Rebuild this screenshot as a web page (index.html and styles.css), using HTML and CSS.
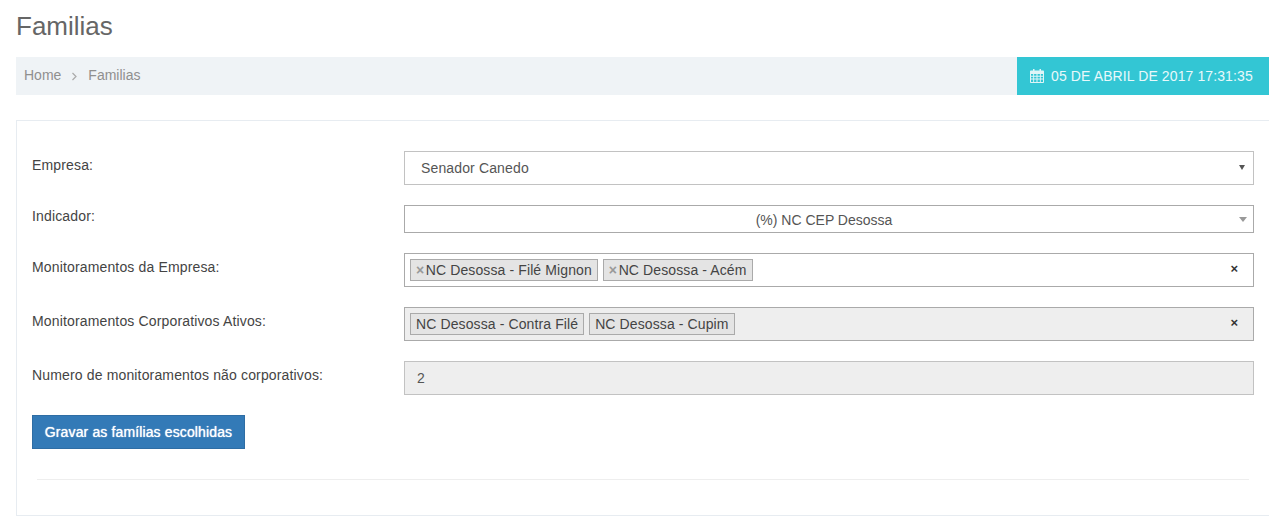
FILE: index.html
```html
<!DOCTYPE html>
<html lang="pt">
<head>
<meta charset="utf-8">
<title>Familias</title>
<link rel="stylesheet" href="styles.css">
</head>
<body>
<h1 class="page-title">Familias</h1>
<div class="bar">
  <nav class="crumbs"><span>Home</span><svg class="chev" width="7" height="9" viewBox="0 0 7 9"><path d="M1.500 1l3.500 3.500L1.500 8" fill="none" stroke="#aaa" stroke-width="1.200"/></svg><span>Familias</span></nav>
  <div class="date">
    <svg class="cal" width="14" height="14" viewBox="0 0 14 14"><path fill="#dff5f7" fill-rule="evenodd" d="M3 0h1.500v1.500h5V0H11v1.500h2.200c.4 0 .8.4.8.8v10.900c0 .4-.4.8-.8.8H.8c-.4 0-.8-.4-.8-.8V2.300c0-.4.4-.8.8-.8H3zM1 5v1.800h2.200V5zm3.100 0v1.800h2.400V5zm3.400 0v1.800h2.400V5zm3.300 0v1.800H13V5zM1 7.700v1.900h2.200V7.700zm3.100 0v1.900h2.400V7.700zm3.400 0v1.900h2.400V7.700zm3.300 0v1.900H13V7.700zM1 10.500V13h2.200v-2.500zm3.100 0V13h2.400v-2.500zm3.400 0V13h2.400v-2.500zm3.300 0V13H13v-2.500z"/></svg>
    <span>05 DE ABRIL DE 2017 17:31:35</span>
  </div>
</div>
<main class="card">
  <form class="form">
    <div class="row h34">
      <label>Empresa:</label>
      <div class="ctl light"><span class="val">Senador Canedo</span><i class="arrow small"></i></div>
    </div>
    <div class="row h28">
      <label class="tight">Indicador:</label>
      <div class="ctl dark center"><span>(%) NC CEP Desossa</span><i class="arrow"></i></div>
    </div>
    <div class="row h34">
      <label>Monitoramentos da Empresa:</label>
      <div class="ctl dark tags">
        <span class="tag"><b class="rm">×</b>NC Desossa - Filé Mignon</span>
        <span class="tag"><b class="rm">×</b>NC Desossa - Acém</span>
        <b class="clear">×</b>
      </div>
    </div>
    <div class="row h34">
      <label>Monitoramentos Corporativos Ativos:</label>
      <div class="ctl dark tags off">
        <span class="tag">NC Desossa - Contra Filé</span>
        <span class="tag">NC Desossa - Cupim</span>
        <b class="clear">×</b>
      </div>
    </div>
    <div class="row h34">
      <label>Numero de monitoramentos não corporativos:</label>
      <div class="ctl light off"><span class="val num">2</span></div>
    </div>
    <button type="button" class="save">Gravar as famílias escolhidas</button>
    <hr class="rule">
  </form>
</main>
</body>
</html>
```
FILE: styles.css
```css
* { box-sizing: border-box; }
html, body { margin: 0; }
body {
  background: #fff;
  color: #555;
  font: 14px/20px "Liberation Sans", Arial, sans-serif;
  padding: 11px 0 0 16px;
  height: 525px;
  overflow: hidden;
}
.page-title {
  margin: 0 0 16px;
  height: 30px;
  font-size: 26px;
  line-height: 30px;
  font-weight: 400;
  color: #666;
}
.bar {
  display: flex;
  height: 38px;
  background: #eff3f6;
  justify-content: space-between;
}
.crumbs {
  display: flex;
  align-items: center;
  padding: 0 0 2px 8px;
  color: #8f8f8f;
}
.chev { margin: 2px 10px 0 10px; }
.date {
  width: 252px;
  background: #33c6d4;
  color: #e8f9fb;
  display: flex;
  align-items: center;
  padding-left: 13px;
  gap: 7px;
  letter-spacing: 0.11px;
}
.card {
  margin-top: 25px;
  height: 396px;
  border: 1px solid #e7ecf1;
  border-right: 0;
  padding: 30px 15px 0;
}
.row {
  display: grid;
  grid-template-columns: 372px 850px;
  margin-bottom: 20px;
}
.row label { padding-top: 4px; color: #444; letter-spacing: 0.15px; }
.row .tight { padding-top: 1px; }
.h34 { height: 34px; }
.h28 { height: 28px; }
.ctl {
  position: relative;
  display: flex;
  align-items: center;
  background: #fff;
  color: #555;
}
.light { border: 1px solid #c2c2c2; }
.dark { border: 1px solid #aaa; }
.off { background: #eee; }
.val { padding-left: 16px; letter-spacing: 0.14px; }
.num { padding-left: 12px; }
.center { justify-content: center; }
.center span { padding: 2px 10px 0 0; }
.arrow {
  position: absolute;
  right: 6px;
  top: 11px;
  border: 4px solid transparent;
  border-top: 5px solid #999;
  border-bottom: 0;
}
.arrow.small {
  right: 8px;
  top: 13px;
  border-width: 3px;
  border-top: 5px solid #555;
  border-bottom: 0;
}
.tags { padding-left: 5px; gap: 5px; }
.tag {
  height: 22px;
  line-height: 20px;
  padding: 0 5px;
  border: 1px solid #aaa;
  background: #e4e4e4;
  color: #444;
  white-space: nowrap;
  letter-spacing: 0.11px;
}
.rm { color: #999; margin-right: 1.500px; font-weight: 700; }
.clear {
  position: absolute;
  right: 15px;
  top: 5px;
  color: #333;
  font-size: 13px;
}
.save {
  display: block;
  width: 213px;
  height: 34px;
  background: #337ab7;
  border: 1px solid #2e6da4;
  color: #fff;
  font: 400 14px/20px "Liberation Sans", Arial, sans-serif;
  letter-spacing: 0.13px;
  padding: 0;
  text-shadow: 0 0 1px #fff;
}
.rule {
  margin: 30px 5px 0;
  width: 1212px;
  border: 0;
  border-top: 1px solid #eee;
}
```
